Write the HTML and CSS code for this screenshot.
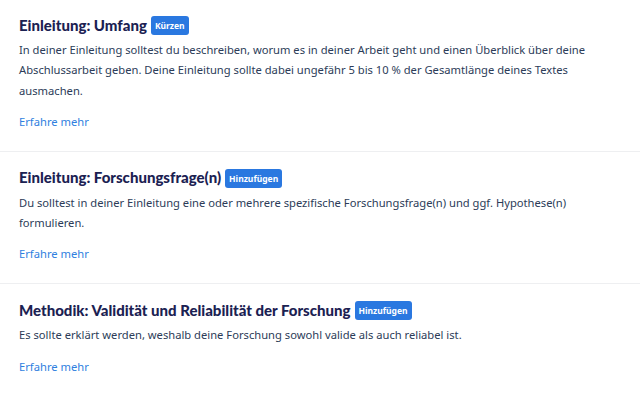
FILE: index.html
```html
<!DOCTYPE html>
<html lang="de">
<head>
  <meta charset="UTF-8">
  <title>Hinweise</title>
  <link rel="stylesheet" href="styles.css">
</head>
<body>
  <div class="hint-list">
    <div class="hint">
      <h3>Einleitung: Umfang <span class="badge">Kürzen</span></h3>
      <p>In deiner Einleitung solltest du beschreiben, worum es in deiner Arbeit geht und einen Überblick über deine Abschlussarbeit geben. Deine Einleitung sollte dabei ungefähr 5 bis 10 % der Gesamtlänge deines Textes ausmachen.</p>
      <a href="#" class="more">Erfahre mehr</a>
    </div>

    <div class="hint">
      <h3>Einleitung: Forschungsfrage(n) <span class="badge">Hinzufügen</span></h3>
      <p>Du solltest in deiner Einleitung eine oder mehrere spezifische Forschungsfrage(n) und ggf. Hypothese(n) formulieren.</p>
      <a href="#" class="more">Erfahre mehr</a>
    </div>

    <div class="hint">
      <h3>Methodik: Validität und Reliabilität der Forschung <span class="badge">Hinzufügen</span></h3>
      <p>Es sollte erklärt werden, weshalb deine Forschung sowohl valide als auch reliabel ist.</p>
      <a href="#" class="more">Erfahre mehr</a>
    </div>
  </div>
</body>
</html>
```

FILE: styles.css
```css
* {
  box-sizing: border-box;
}

body {
  margin: 0;
  background-color: #fff;
  font-family: "Noto Sans", sans-serif;
}

.hint {
  padding: 15px 19px 19px;
  border-bottom: 1px solid #eeeff1;
}

.hint:first-child {
  padding-top: 14px;
}

.hint h3 {
  margin: 0 0 5px;
  font-family: Lato, sans-serif;
  font-weight: 900;
  font-size: 15px;
  line-height: 20px;
  color: #1b2152;
  display: flex;
  align-items: center;
  gap: 4px;
}

.badge {
  display: inline-block;
  background-color: #2a78e0;
  color: #fff;
  font-family: "Noto Sans", sans-serif;
  font-size: 8.5px;
  font-weight: 700;
  line-height: 19px;
  padding: 0 4px;
  border-radius: 3px;
  margin-top: 2px;
}

.hint p {
  margin: 0 0 8px;
  font-size: 11.2px;
  line-height: 20.3px;
  color: #2c3c58;
}

.more {
  display: inline-block;
  font-size: 11.2px;
  line-height: 20px;
  color: #2f7fe0;
  text-decoration: none;
}
```
